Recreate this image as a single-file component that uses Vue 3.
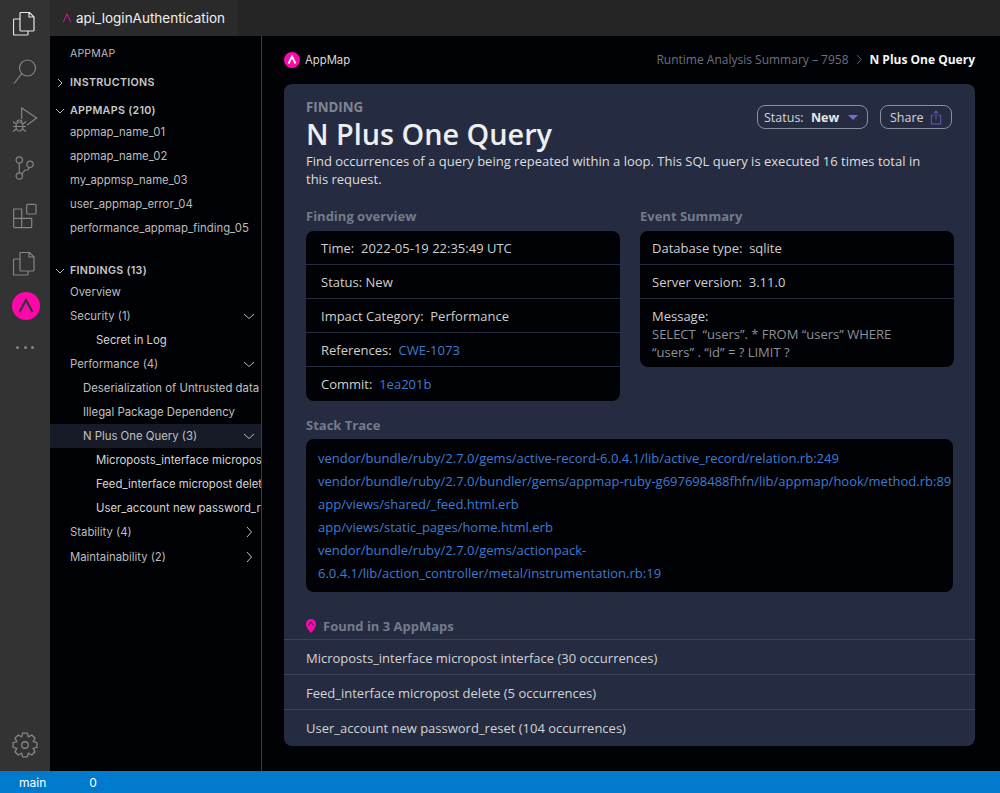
<script setup>
const appmaps = ['appmap_name_01','appmap_name_02','my_appmsp_name_03','user_appmap_error_04','performance_appmap_finding_05']
const stack = [
  'vendor/bundle/ruby/2.7.0/gems/active-record-6.0.4.1/lib/active_record/relation.rb:249',
  'vendor/bundle/ruby/2.7.0/bundler/gems/appmap-ruby-g697698488fhfn/lib/appmap/hook/method.rb:89',
  'app/views/shared/_feed.html.erb',
  'app/views/static_pages/home.html.erb',
  'vendor/bundle/ruby/2.7.0/gems/actionpack-',
  '6.0.4.1/lib/action_controller/metal/instrumentation.rb:19'
]
const found = [
  'Microposts_interface micropost interface (30 occurrences)',
  'Feed_interface micropost delete (5 occurrences)',
  'User_account new password_reset (104 occurrences)'
]
const gear = (() => {
  const pts = []
  const teeth = 8
  for (let i = 0; i < teeth; i++) {
    const a = (i / teeth) * Math.PI * 2
    const step = Math.PI * 2 / teeth
    const list = [[8.2, -0.5], [11.2, -0.24], [11.2, 0.24], [8.2, 0.5]]
    for (const [r, t] of list) {
      const b = a + t * step
      pts.push((12 + r * Math.sin(b)).toFixed(2) + ' ' + (12 - r * Math.cos(b)).toFixed(2))
    }
  }
  return 'M' + pts.join('L') + 'Z'
})()
</script>

<template>
  <div class="window">
    <div class="body">
      <nav class="activity">
        <svg class="act first" viewBox="0 0 24 24" width="24" height="24"><path d="M8 .5h8.500L21 5v13a1 1 0 0 1-1 1H8a1 1 0 0 1-1-1V1.500a1 1 0 0 1 1-1zM16 .5V5h5M7 7H1.500a1 1 0 0 0-1 1v14a1 1 0 0 0 1 1H14a1 1 0 0 0 1-1v-3"/></svg>
        <svg class="act" viewBox="0 0 26 26" width="26" height="26"><circle cx="15.500" cy="9" r="8"/><path d="M9.800 14.600 2 24.500"/></svg>
        <svg class="act" viewBox="0 0 26 26" width="26" height="26"><path d="M9.700 12V1L24.700 11 15 18"/><path d="M4 19.500a3.500 4.500 0 0 1 7 0 3.500 4.500 0 0 1-7 0zM5 15.500a2.500 2.500 0 0 1 5 0M1 14.500l3 2.500M14 14.500l-3 2.500M1 19.500h3M11 19.500h3M1 24.500l3.500-2.500M14 24.500 10.500 22M4 19.500h7"/></svg>
        <svg class="act" viewBox="0 0 24 26" width="24" height="26"><circle cx="6.300" cy="5" r="3.200"/><circle cx="6.300" cy="21" r="3.200"/><circle cx="17" cy="9.300" r="3.200"/><path d="M6.300 8.200v9.600M9 19l3-4h3l1.500-2.700"/></svg>
        <svg class="act" viewBox="0 0 26 26" width="26" height="26"><path d="M1.700 6h8v18.700h-7a1 1 0 0 1-1-1zM1.700 15.300h18v8.400a1 1 0 0 1-1 1h-9M9.700 15.300v9.400"/><rect x="14.700" y="1.300" width="9.300" height="9.700" rx="1"/></svg>
        <svg class="act" viewBox="0 0 24 24" width="24" height="24"><path d="M8 .5h8.500L21 5v13a1 1 0 0 1-1 1H8a1 1 0 0 1-1-1V1.500a1 1 0 0 1 1-1zM16 .5V5h5M7 7H1.500a1 1 0 0 0-1 1v14a1 1 0 0 0 1 1H14a1 1 0 0 0 1-1v-3"/></svg>
        <div class="logo-big"><svg viewBox="0 0 28 28" width="28" height="28"><path d="M7.500 20 14 8l6.500 12" fill="none" stroke="#33343a" stroke-width="2.200"/></svg></div>
        <div class="dots"><i></i><i></i><i></i></div>
        <svg class="act gear" viewBox="0 0 24 24" width="26" height="26"><circle cx="12" cy="12" r="3"/><path :d="gear"/></svg>
      </nav>
      <div class="right">
        <header class="tabs">
          <div class="tab">
            <svg viewBox="0 0 12 12" width="10" height="10"><path d="M1.500 11 6 1l4.500 10" fill="none" stroke="#d51ba0" stroke-width="1.200"/></svg>
            <span>api_loginAuthentication</span>
          </div>
        </header>
        <div class="panes">
          <aside class="side">
            <div class="side-title">APPMAP</div>
            <div class="section mt-instr"><svg class="chev" viewBox="0 0 10 10" width="10" height="10"><path d="m3 1 4 4-4 4"/></svg>INSTRUCTIONS</div>
            <div class="section mt-maps"><svg class="chev" viewBox="0 0 10 10" width="10" height="10"><path d="m1 3 4 4 4-4"/></svg>APPMAPS (210)</div>
            <div v-for="a in appmaps" :key="a" class="row l1">{{ a }}</div>
            <div class="section mt-find"><svg class="chev" viewBox="0 0 10 10" width="10" height="10"><path d="m1 3 4 4 4-4"/></svg>FINDINGS (13)</div>
            <div class="row l1">Overview</div>
            <div class="row l1 has">Security (1)<svg class="tchev" viewBox="0 0 12 12"><path d="m1 4 5 4.500L11 4"/></svg></div>
            <div class="row l3">Secret in Log</div>
            <div class="row l1 has">Performance (4)<svg class="tchev" viewBox="0 0 12 12"><path d="m1 4 5 4.500L11 4"/></svg></div>
            <div class="row l2">Deserialization of Untrusted data</div>
            <div class="row l2">Illegal Package Dependency</div>
            <div class="row l2 has sel">N Plus One Query (3)<svg class="tchev" viewBox="0 0 12 12"><path d="m1 4 5 4.500L11 4"/></svg></div>
            <div class="row l3">Microposts_interface microposts</div>
            <div class="row l3">Feed_interface micropost delete</div>
            <div class="row l3">User_account new password_reset</div>
            <div class="row l1 has">Stability (4)<svg class="tchev" viewBox="0 0 12 12"><path d="m4 1 4.500 5L4 11"/></svg></div>
            <div class="row l1 has last">Maintainability (2)<svg class="tchev" viewBox="0 0 12 12"><path d="m4 1 4.500 5L4 11"/></svg></div>
          </aside>
          <main class="main">
            <div class="topbar">
              <div class="brand">
                <svg viewBox="0 0 16 16" width="16" height="16"><circle cx="8" cy="8" r="8" fill="#ff07aa"/><path d="M4.500 11.500 8 4.500l3.500 7" fill="none" stroke="#fff" stroke-width="1.800"/></svg>
                <span>AppMap</span>
              </div>
              <div class="crumbs">
                <span>Runtime Analysis Summary – 7958</span>
                <svg viewBox="0 0 8 12" width="7" height="11"><path d="m1.500 1 4.500 5-4.500 5" fill="none" stroke="#6c7080"/></svg>
                <b>N Plus One Query</b>
              </div>
            </div>
            <section class="card">
              <div class="pad">
                <div class="head">
                  <div class="head-text">
                    <div class="eyebrow">FINDING</div>
                    <h1>N Plus One Query</h1>
                  </div>
                  <div class="actions">
                    <button class="btn status">Status:&nbsp; <b>New</b><span class="caret"></span></button>
                    <button class="btn share">Share
                      <svg viewBox="0 0 12 16" width="12" height="15"><path d="M3.500 5.500H1v9.500h10V5.500H8.500M6 10V1M3.500 3.500 6 1l2.500 2.500" fill="none" stroke="#6c5bc4"/></svg>
                    </button>
                  </div>
                </div>
                <p class="desc">Find occurrences of a query being repeated within a loop. This SQL query is executed 16 times total in this request.</p>
                <div class="cols">
                  <div class="col">
                    <h2>Finding overview</h2>
                    <div class="box">
                      <div class="cell">Time:&nbsp; 2022-05-19 22:35:49 UTC</div>
                      <div class="cell">Status: New</div>
                      <div class="cell">Impact Category:&nbsp; Performance</div>
                      <div class="cell">References:&nbsp; <a>CWE-1073</a></div>
                      <div class="cell">Commit:&nbsp; <a>1ea201b</a></div>
                    </div>
                  </div>
                  <div class="col event">
                    <h2>Event Summary</h2>
                    <div class="box">
                      <div class="cell">Database type:&nbsp; sqlite</div>
                      <div class="cell">Server version:&nbsp; 3.11.0</div>
                      <div class="cell msg">Message:<br><span>SELECT &nbsp;“users”. * FROM “users” WHERE “users” . “id” = ? LIMIT ?</span></div>
                    </div>
                  </div>
                </div>
                <h2 class="st">Stack Trace</h2>
                <div class="box stack"><a v-for="s in stack" :key="s">{{ s }}</a></div>
              </div>
              <div class="found-head">
                <svg viewBox="0 0 10 14" width="10" height="14"><path d="M5 14C2 10.500 0 8 0 5a5 5 0 0 1 10 0c0 3-2 5.500-5 9z" fill="#ff07aa"/><path d="M2.500 6.500 5 3l2.500 3.500" fill="none" stroke="#252c41"/></svg>
                <h2>Found in 3 AppMaps</h2>
              </div>
              <div v-for="f in found" :key="f" class="found-row">{{ f }}</div>
            </section>
          </main>
        </div>
      </div>
    </div>
    <footer class="status-bar"><span>main</span><span>0</span></footer>
  </div>
</template>

<style>
html, body { margin: 0; background: #010206; }
</style>

<style scoped>
.window { width: 1000px; height: 793px; display: flex; flex-direction: column; overflow: hidden; background: #010206; font-family: Inter, sans-serif; }
.body { flex: 1; display: flex; min-height: 0; }
.activity { width: 50px; background: #333333; display: flex; flex-direction: column; align-items: center; flex: none; }
.act { fill: none; stroke: #858585; stroke-width: 1.200; flex: none; display: block; }
.activity .first { stroke: #e6e6e6; margin-top: 12px; }
.activity .act:nth-child(2) { margin-top: 23px; }
.activity .act:nth-child(3) { margin-top: 22px; }
.activity .act:nth-child(4) { margin-top: 22px; }
.activity .act:nth-child(5) { margin-top: 22px; }
.activity .act:nth-child(6) { margin-top: 23px; }
.logo-big { width: 28px; height: 28px; border-radius: 50%; background: #ff07aa; margin-top: 16px; margin-left: 2px; flex: none; }
.logo-big svg { display: block; }
.dots { display: flex; gap: 4.500px; margin-top: 26px; }
.dots i { width: 3px; height: 3px; border-radius: 50%; background: #858585; }
.activity .gear { margin-top: auto; margin-bottom: 13px; }
.right { flex: 1; display: flex; flex-direction: column; min-width: 0; }
.tabs { height: 36px; background: #252526; flex: none; display: flex; }
.tab { width: 188px; height: 36px; background: #2a2a2b; display: flex; align-items: center; gap: 4px; padding-left: 12px; box-sizing: border-box; color: #f0f0f0; font-size: 13.500px; }
.panes { flex: 1; display: flex; min-height: 0; }
.side { width: 212px; flex: none; border-right: 1px solid #3a3d45; box-sizing: border-box; color: #c5c5c5; font-size: 11.350px; overflow: hidden; padding-top: 9px; }
.side-title { height: 17px; line-height: 17px; padding-left: 20px; font-size: 10.500px; letter-spacing: .2px; color: #bbb; }
.section { height: 18px; line-height: 18px; font-weight: 600; font-size: 10.700px; color: #c8c8c8; padding-left: 20px; position: relative; letter-spacing: .3px; }
.chev { position: absolute; left: 5px; top: 4px; fill: none; stroke: #bbb; stroke-width: 1; }
.mt-instr { margin-top: 12px; }
.mt-maps { margin-top: 10px; }
.mt-find { margin-top: 22px; }
.row { height: 24px; line-height: 25px; white-space: nowrap; overflow: hidden; position: relative; }
.last { margin-top: 1px; }
.l1 { padding-left: 20px; color: #bcbcbc; }
.l2 { padding-left: 33px; color: #c0c0c0; }
.l3 { padding-left: 46px; color: #d4d4d4; }
.sel { background: #171b27; }
.tchev { position: absolute; right: 6px; top: 6px; width: 12px; height: 12px; fill: none; stroke: #bbb; stroke-width: 1; }
.main { flex: 1; min-width: 0; padding: 0 25px 25px 22px; display: flex; flex-direction: column; font-family: "Open Sans", sans-serif; }
.topbar { height: 48px; display: flex; align-items: center; justify-content: space-between; flex: none; }
.brand { display: flex; align-items: center; gap: 5px; color: #d8d8d8; font: 11.300px Inter, sans-serif; }
.brand svg { display: block; }
.crumbs { display: flex; align-items: center; gap: 7px; font-size: 12px; color: #6c7080; padding-bottom: 2px; }
.crumbs b { color: #f4f4f4; font-weight: 700; }
.card { flex: 1; background: #252c41; border-radius: 8px; color: #d6d6d6; }
.pad { padding: 14px 22px 0; }
.head { display: flex; justify-content: space-between; }
.eyebrow { font-size: 13.300px; font-weight: 700; color: #808592; line-height: 18px; }
h1 { margin: 0 0 1px; font-size: 28.800px; line-height: 35px; font-weight: 600; color: #eeeeee; }
.actions { display: flex; gap: 12px; align-items: flex-start; margin: 7px 1px 0 0; }
.btn { height: 24px; border: 1px solid #8a8fa0; border-radius: 8px; background: transparent; color: #d6d6d6; font: 12.500px "Open Sans", sans-serif; display: flex; align-items: center; box-sizing: border-box; white-space: nowrap; }
.btn b { font-weight: 700; color: #e6e6e6; margin-left: 4px; }
.status { width: 111px; padding: 0 0 0 6px; }
.share { width: 72px; padding: 0 0 0 9px; gap: 6px; }
.caret { margin-left: 9px; width: 0; height: 0; border-left: 5px solid transparent; border-right: 5px solid transparent; border-top: 5px solid #7a68d8; }
.desc { margin: 0; font-size: 13px; line-height: 18px; color: #dedede; max-width: 625px; }
.cols { display: grid; grid-template-columns: 314px 314px; column-gap: 20px; margin-top: 19px; align-items: start; }
h2 { margin: 0; font-size: 13px; line-height: 18px; font-weight: 700; color: #757a8a; }
.box { background: #010206; border-radius: 8px; margin-top: 6px; font-size: 13px; color: #cfcfcf; }
.cell { padding: 0 15px; height: 34px; line-height: 34px; border-bottom: 1px solid #252c41; box-sizing: border-box; }
.cell:last-child { border-bottom: 0; }
.event .cell { padding: 0 12px; }
.cell a, .stack a { color: #3f7bd0; }
.event .msg { height: auto; line-height: 18px; padding: 8px 30px 6px 12px; }
.msg span { color: #8d9099; }
.st { margin-top: 15px; }
.stack { display: flex; flex-direction: column; padding: 8px 0 7px 12px; margin-top: 5px; line-height: 23px; font-size: 13px; white-space: nowrap; }
.found-head { display: flex; align-items: center; gap: 7px; padding: 0 22px; margin-top: 24px; height: 20px; }
.found-row { height: 35px; line-height: 36px; padding: 0 22px; font-size: 13px; border-top: 1px solid #3d4456; box-sizing: border-box; color: #d4d4d4; }
.found-head + .found-row { margin-top: 3px; }
.status-bar { height: 22px; flex: none; background: #007acc; color: #fff; font-size: 12px; display: flex; align-items: center; gap: 43px; padding-left: 19px; }
</style>
